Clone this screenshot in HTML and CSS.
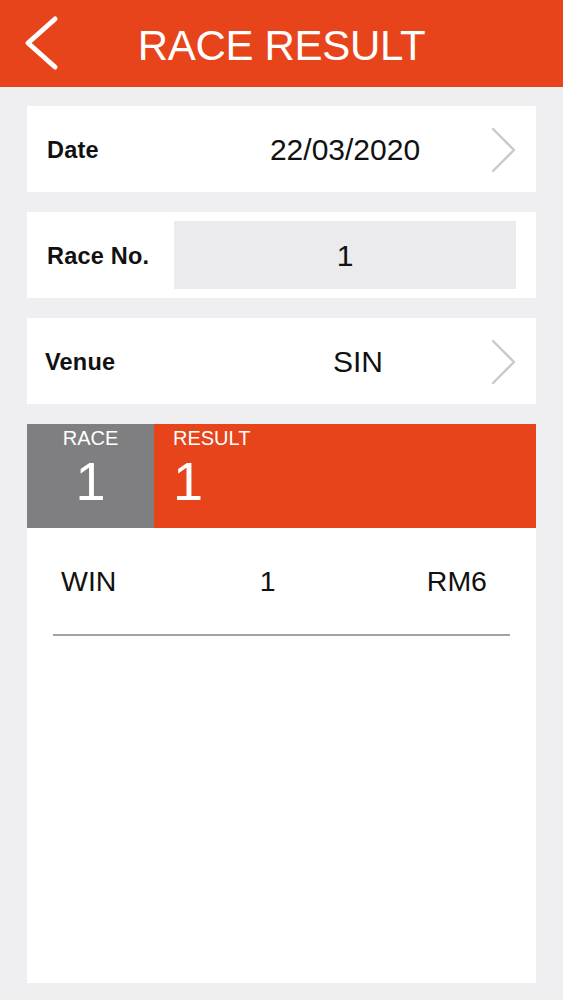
FILE: index.html
```html
<!DOCTYPE html>
<html lang="en">
<head>
<meta charset="utf-8">
<title>Race Result</title>
<link rel="stylesheet" href="styles.css">
</head>
<body>
<header class="topbar">
  <button class="back" aria-label="Back">
    <svg width="44" height="60" viewBox="0 0 44 60"><path d="M34 5 L7 29 L34 53" fill="none" stroke="#fff" stroke-width="5" stroke-linecap="round" stroke-linejoin="round"/></svg>
  </button>
  <h1 class="title">RACE RESULT</h1>
</header>
<main class="content">
  <div class="card">
    <span class="label">Date</span>
    <span class="value">22/03/2020</span>
    <svg class="chev" width="30" height="48" viewBox="0 0 30 48"><path d="M4 3 L25 24 L4 45" fill="none" stroke="#c9c9cb" stroke-width="2.4" stroke-linecap="round" stroke-linejoin="round"/></svg>
  </div>
  <div class="card">
    <span class="label">Race No.</span>
    <span class="value input">1</span>
  </div>
  <div class="card">
    <span class="label label-venue">Venue</span>
    <span class="value value-venue">SIN</span>
    <svg class="chev" width="30" height="48" viewBox="0 0 30 48"><path d="M4 3 L25 24 L4 45" fill="none" stroke="#c9c9cb" stroke-width="2.4" stroke-linecap="round" stroke-linejoin="round"/></svg>
  </div>
  <section class="result">
    <div class="result-head">
      <div class="race-col">
        <span class="small">RACE</span>
        <span class="big">1</span>
      </div>
      <div class="result-col">
        <span class="small">RESULT</span>
        <span class="big">1</span>
      </div>
    </div>
    <div class="result-body">
      <div class="row">
        <span>WIN</span>
        <span class="mid">1</span>
        <span>RM6</span>
      </div>
    </div>
  </section>
</main>
</body>
</html>
```
FILE: styles.css
```css
* { box-sizing: border-box; }
html, body { margin: 0; padding: 0; }
body {
  width: 563px;
  height: 1000px;
  background: #efeef0;
  font-family: "Liberation Sans", Arial, Helvetica, sans-serif;
  color: #111;
  overflow: hidden;
}
.topbar {
  position: relative;
  height: 87px;
  background: #e8441b;
  display: flex;
  align-items: center;
  justify-content: center;
}
.back {
  position: absolute;
  left: 21px;
  top: 14px;
  padding: 0;
  border: 0;
  background: none;
  display: flex;
}
.title {
  margin: 0;
  color: #fff;
  font-weight: 400;
  font-size: 42px;
  letter-spacing: -0.3px;
  line-height: 1;
  padding-top: 4px;
}
.content {
  padding: 19px 27px 0;
  display: flex;
  flex-direction: column;
  gap: 20px;
}
.card {
  position: relative;
  background: #fff;
  height: 86px;
  display: flex;
  align-items: center;
  padding: 0 20px;
}
.label {
  width: 127px;
  font-weight: 700;
  font-size: 23.5px;
  letter-spacing: 0.2px;
  padding-top: 2px;
}
.label-venue { margin-left: -2px; width: 129px; }
.value {
  flex: 1;
  text-align: center;
  font-size: 30px;
  padding-top: 2px;
}
.value-venue { padding-left: 26px; }
.input {
  background: #ebeaec;
  align-self: stretch;
  margin: 9px 0;
  display: flex;
  align-items: center;
  justify-content: center;
}
.chev {
  position: absolute;
  right: 17px;
  top: 20px;
}
.result { display: flex; flex-direction: column; }
.result-head {
  display: grid;
  grid-template-columns: 127px 1fr;
  height: 104px;
  color: #fff;
}
.race-col {
  background: #7f7e80;
  display: flex;
  flex-direction: column;
  align-items: center;
}
.result-col {
  background: #e8441b;
  display: flex;
  flex-direction: column;
  align-items: flex-start;
  padding-left: 19px;
}
.small {
  font-size: 20px;
  line-height: 1;
  margin-top: 4px;
}
.big {
  font-size: 54px;
  line-height: 1;
  margin-top: 6px;
}
.result-body {
  background: #fff;
  height: 455px;
  padding: 0 26px;
}
.row {
  height: 108px;
  display: flex;
  align-items: center;
  justify-content: space-between;
  padding: 0 23px 0 8px;
  border-bottom: 2px solid #a3a3a5;
  font-size: 28.5px;
}
.mid { margin-right: 8px; }
```
